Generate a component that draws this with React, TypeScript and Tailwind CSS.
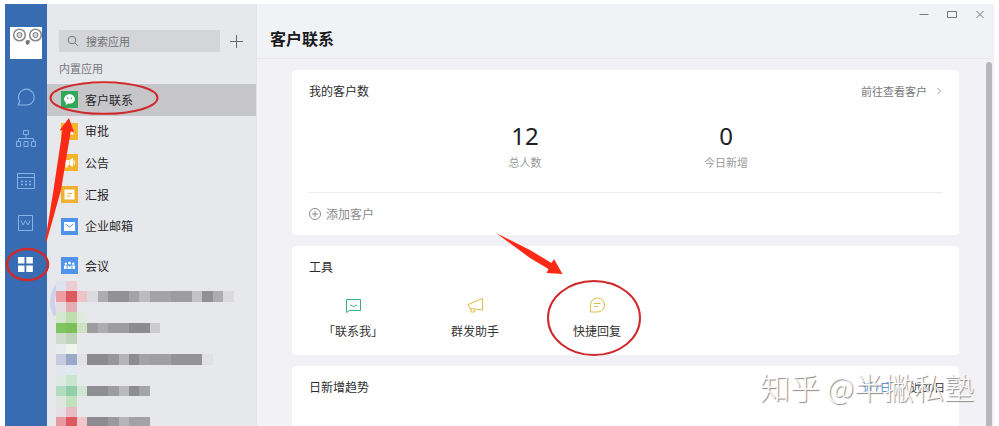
import React from "react";

type AppItem = {
	name: string;
	color: string;
	glyph: React.ReactNode;
};

const builtIn: AppItem[] = [
	{
		name: "客户联系",
		color: "bg-[#2fa85a]",
		glyph: (
			<>
				<ellipse cx="8.5" cy="8" rx="5.5" ry="4.7" fill="#fff" />
				<path d="M5 11.5 4.6 14l2.6-1.6z" fill="#fff" />
				<circle cx="6.6" cy="7.2" r="0.8" fill="#2fa85a" />
				<circle cx="10.4" cy="7.2" r="0.8" fill="#2fa85a" />
			</>
		),
	},
	{
		name: "审批",
		color: "bg-[#f3b32b]",
		glyph: <path d="M6 4h5v4l2 3.500H4.500L6 8z" fill="#fff" />,
	},
	{
		name: "公告",
		color: "bg-[#f3b32b]",
		glyph: <path d="M3 6h5v5H6.5v2.500h-2V11H3zM8.5 6 12 4v9l-3.500-2zM12.700 6.500H14v4h-1.300z" fill="#fff" />,
	},
	{
		name: "汇报",
		color: "bg-[#efb02f]",
		glyph: (
			<>
				<path d="M3.5 3.5h10v10h-10z" fill="#fff" />
				<path d="M6.5 7.5h5M5.5 10h4" stroke="#efb02f" />
			</>
		),
	},
	{
		name: "企业邮箱",
		color: "bg-[#4f93ea]",
		glyph: (
			<>
				<path d="M3 4h11v9H3z" fill="#fff" />
				<path d="m4.5 6 4 3 4-3" stroke="#4f93ea" fill="none" />
			</>
		),
	},
];

const meeting: AppItem = {
	name: "会议",
	color: "bg-[#4f93ea]",
	glyph: (
		<g fill="#fff">
			<circle cx="4.8" cy="6.8" r="1.2" />
			<circle cx="8.5" cy="6" r="1.5" />
			<circle cx="12.2" cy="6.8" r="1.2" />
			<path d="M3 12V8.500h2.600V12zM6.500 12V8l2 2 2-2v4zM11.400 12V8.500H14V12z" />
		</g>
	),
};

// [column, row, colour, columns wide]
const mosaic: [number, number, string, number?][] = [
	[0, 0, "#dfe2ef"], [1, 0, "#eccdd3"],
	[0, 1, "#ec9da2"], [1, 1, "#dc5960"], [2, 1, "#f0c4c7"], [3, 1, "#dcdbe0"], [4, 1, "#adadb1"],
	[5, 1, "#919196", 2], [7, 1, "#a3a3a8"], [8, 1, "#bbbbc0"], [9, 1, "#a4a4a8", 2], [11, 1, "#9c9ca1", 2],
	[13, 1, "#c3c3c7"], [14, 1, "#909095"], [15, 1, "#adadb1"], [16, 1, "#d9d9de"],
	[0, 2, "#e5dde2"], [1, 2, "#e0aeb3"],
	[0, 3, "#d5e7cf"], [1, 3, "#bddfb0"], [2, 3, "#e1eadf"],
	[0, 4, "#80c660"], [1, 4, "#79c158"], [2, 4, "#cde3c4"], [3, 4, "#9d9da1"], [4, 4, "#adadb1"],
	[5, 4, "#9d9da2", 2], [7, 4, "#8b8b90", 2], [9, 4, "#cbcbd0"],
	[0, 5, "#cfdccd"], [1, 5, "#bfd4bb"],
	[0, 6, "#e9ebed"], [1, 6, "#f1f4ef"],
	[0, 7, "#c6cbdf"], [1, 7, "#9ba9c9"], [2, 7, "#e1e2e5"], [3, 7, "#8c8c90", 2], [5, 7, "#98989c"],
	[6, 7, "#b4b4b9"], [7, 7, "#8c8c91"], [8, 7, "#a2a2a7"], [9, 7, "#9f9fa4", 2], [11, 7, "#939398", 3],
	[14, 7, "#e1e1e5"],
	[0, 8, "#e2e6ee"], [1, 8, "#dfe9f1"],
	[0, 9, "#dde9e2"], [1, 9, "#cae5cd"],
	[0, 10, "#b2dcc1"], [1, 10, "#91cfaa"], [2, 10, "#cfe6d3"], [3, 10, "#8e8e92", 2], [5, 10, "#9d9da1"],
	[6, 10, "#b9b9be"], [7, 10, "#8e8e93"], [8, 10, "#a4a4a9"],
	[0, 11, "#dde7df"], [1, 11, "#bfe1bd"],
	[0, 12, "#e8dfe4"], [1, 12, "#e9bcc4"],
	[0, 13, "#e69ba4"], [1, 13, "#dc5960"], [2, 13, "#efc6ca"], [3, 13, "#8c8c90", 2], [5, 13, "#9a9a9e"],
	[6, 13, "#b4b4b9"], [7, 13, "#a2a2a7", 2],
];

function AppRow({ item, active }: { item: AppItem; active?: boolean }) {
	return (
		<button
			type="button"
			className={`flex w-full items-center gap-[7px] pl-[14px] text-left text-[12px] text-[#27272a] ${active ? "bg-[#c6c6c9]" : ""}`}
		>
			<span className={`h-[17px] w-[17px] flex-none ${item.color}`}>
				<svg viewBox="0 0 17 17" className="h-full w-full">
					{item.glyph}
				</svg>
			</span>
			{item.name}
		</button>
	);
}

function RailButton({ label, children }: { label: string; children: React.ReactNode }) {
	return (
		<button type="button" aria-label={label} className="flex h-[42px] w-full items-center justify-center">
			<svg viewBox="0 0 20 20" className="h-5 w-5" fill="none" stroke="#86b4ea">
				{children}
			</svg>
		</button>
	);
}

function Rail() {
	return (
		<nav className="flex w-[42px] flex-none flex-col items-center bg-[#376cb2] pt-[23px]">
			<svg viewBox="0 0 32 32" className="mb-[17px] h-8 w-8 bg-white">
				<g fill="none" stroke="#8b8b8b" strokeWidth="1.6">
					<circle cx="9.5" cy="8" r="5.8" />
					<circle cx="25.5" cy="8" r="5.8" />
				</g>
				<g fill="#d9dcdf" stroke="#777">
					<circle cx="9.5" cy="8" r="2.5" />
					<circle cx="25.5" cy="8" r="2.5" />
				</g>
				<path d="M15.500 14.500q2-2.500 4.500-.5-.5 3.500-2.500 4-2-1-2-3.500z" fill="#777" />
			</svg>
			<RailButton label="消息">
				<path d="M2.300 18H10.500A7.900 7.900 0 1 0 3.600 14.200z" strokeWidth="1.2" strokeLinejoin="round" />
			</RailButton>
			<RailButton label="通讯录">
				<path d="M7.500 1.500h5v4h-5zM10 5.500v4M2.500 12.500v-3h15v3M.5 12.500h4v5h-4zM8 12.500h4v5H8zM15.500 12.500h4v5h-4z" />
			</RailButton>
			<RailButton label="日程">
				<path d="M1.500 2.500h17v15h-17zM1.500 6.500h17" />
				<path d="M5 10.500h10M5 13.500h10" strokeWidth="1.5" strokeDasharray="2 2" />
			</RailButton>
			<RailButton label="微文档">
				<path d="M2.500 2.500h14v15h-14z" />
				<path d="m5 7.500 2 4.500 2.500-4.500 2.500 4.500 2-4.500" />
			</RailButton>
			<RailButton label="工作台">
				<path d="M2 2h6.500v6.500H2zM10.300 2h6.500v6.500h-6.500zM2 10.500h6.500V17H2zM10.300 10.500h6.500V17h-6.500z" fill="#fff" stroke="none" />
			</RailButton>
		</nav>
	);
}

function AppList() {
	return (
		<aside className="w-[210px] flex-none overflow-hidden border-r border-[#e2e3e7] bg-[#e7e8ec] pt-[26px]">
			<div className="flex items-center gap-[7px] pl-3 pr-[11px]">
				<label className="flex h-[22px] min-w-0 flex-1 items-center gap-[7px] bg-[#d4d5d9] pl-2">
					<svg viewBox="0 0 12 12" className="h-3 w-3 flex-none" fill="none" stroke="#77787c">
						<circle cx="5" cy="5" r="3.8" />
						<path d="m8 8 3 3" />
					</svg>
					<input
						type="text"
						aria-label="搜索应用"
						placeholder="搜索应用"
						className="w-full min-w-0 bg-transparent text-[11px] outline-none placeholder:text-[#707175]"
					/>
				</label>
				<button type="button" aria-label="添加应用" className="flex h-5 w-[18px] flex-none items-center justify-center">
					<svg viewBox="0 0 14 14" className="h-[14px] w-[14px]" stroke="#67686b">
						<path d="M7.500 1v13M1 7.500h13" />
					</svg>
				</button>
			</div>
			<h2 className="flex h-8 items-center pl-3 text-[11px] text-[#77787d]">内置应用</h2>
			<div className="grid h-[158px] grid-rows-5">
				{builtIn.map((item, i) => (
					<AppRow key={item.name} item={item} active={i === 0} />
				))}
			</div>
			<div className="mt-2 grid h-[31px]">
				<AppRow item={meeting} />
			</div>
			<svg viewBox="0 0 210 147" className="h-[147px] w-[210px]">
				<path d="M16 0A26 26 0 0 0 9 34" fill="none" stroke="#ccd3e7" strokeWidth="5" />
				<g shapeRendering="crispEdges">
					{mosaic.map(([col, row, fill, span = 1]) => (
						<rect
							key={`${col}-${row}`}
							x={8.7 + col * 10.47}
							y={row * 10.47}
							width={span * 10.47}
							height={10.47}
							fill={fill}
						/>
					))}
				</g>
			</svg>
		</aside>
	);
}

function Stat({ value, label }: { value: number; label: string }) {
	return (
		<div className="flex w-[201px] flex-col items-center">
			<span className="font-['Noto_Sans'] text-[24px] leading-8 text-[#202124]">{value}</span>
			<span className="text-[11px] leading-5 text-[#999]">{label}</span>
		</div>
	);
}

function Tool({ label, color, children }: { label: string; color: string; children: React.ReactNode }) {
	return (
		<button type="button" className="flex w-[122px] flex-col items-center gap-[7px]">
			<svg viewBox="0 0 18 18" className={`h-[18px] w-[18px] ${color}`} fill="none" stroke="currentColor">
				{children}
			</svg>
			<span className="text-[12px] leading-5 text-[#333]">{label}</span>
		</button>
	);
}

function CardTitle({ children }: { children: React.ReactNode }) {
	return <h2 className="text-[12px] text-[#2c2c2e]">{children}</h2>;
}

// hand-drawn style marks pointing out the path to the quick reply tool
function Callouts() {
	return (
		<svg viewBox="0 0 999 426" className="pointer-events-none absolute left-0 top-0 h-[426px] w-[999px]">
			<g fill="none" stroke="#cf2a2c" strokeWidth="2">
				<ellipse cx="104" cy="98" rx="53.5" ry="15.8" />
				<ellipse cx="27.5" cy="264.500" rx="20.5" ry="15.5" strokeWidth="2.5" />
				<ellipse cx="594" cy="318" rx="46" ry="37" />
			</g>
			<g fill="#fb2a16">
				<path d="M45 242 53.500 190 62.500 130 59.500 130.500 69 118 74 132 70.700 131.500 61 190 47 240z" />
				<path d="M496 233 530 250 551.500 263 554 259 562.500 274 546.500 273 548.500 269 530 258z" />
			</g>
		</svg>
	);
}

export default function App() {
	return (
		<div className="relative h-screen overflow-hidden bg-white px-[5px] pt-1 font-['Noto_Sans_CJK_SC',sans-serif]">
			<div className="flex h-full">
				<Rail />
				<AppList />

				<div className="flex min-w-0 flex-1 flex-col bg-[#f1f1f6]">
					<header className="flex h-[55px] flex-none justify-between border-b border-[#e7e8ec] bg-[#f0f2f6] pl-[13px]">
						<h1 className="pt-[22px] text-[16px] font-bold leading-6 text-[#18191b]">客户联系</h1>
						<div className="flex h-[22px] items-center gap-1 pr-[2px]">
							<button type="button" aria-label="最小化" className="flex w-6 justify-center">
								<svg viewBox="0 0 10 10" className="h-[10px] w-[10px]" stroke="#77787b">
									<path d="M.5 4.500H9.500" />
								</svg>
							</button>
							<button type="button" aria-label="最大化" className="flex w-6 justify-center">
								<svg viewBox="0 0 10 10" className="h-[10px] w-[10px]" fill="none" stroke="#77787b">
									<path d="M.5 1.500h9v6h-9z" />
								</svg>
							</button>
							<button type="button" aria-label="关闭" className="flex w-6 justify-center">
								<svg viewBox="0 0 10 10" className="h-[10px] w-[10px]" stroke="#77787b">
									<path d="m1.500 1 7 7M8.500 1l-7 7" />
								</svg>
							</button>
						</div>
					</header>

					<div className="flex min-h-0 flex-1">
						<main className="flex min-w-0 flex-1 flex-col gap-[11px] overflow-hidden pl-[35px] pr-[27px] pt-[11px]">
							<section className="flex-none rounded-sm bg-white">
								<div className="flex h-[42px] items-center justify-between pl-[17px] pr-4">
									<CardTitle>我的客户数</CardTitle>
									<a href="#customers" className="flex items-center gap-2 text-[11px] text-[#77787b]">
										前往查看客户
										<svg viewBox="0 0 8 8" className="h-2 w-2" fill="none" stroke="#999">
											<path d="m2.500 1 3 3-3 3" />
										</svg>
									</a>
								</div>
								<div className="flex h-20 justify-center pt-2">
									<Stat value={12} label="总人数" />
									<Stat value={0} label="今日新增" />
								</div>
								<div className="mx-4 border-t border-[#ececee]">
									<button type="button" className="flex h-[42px] items-center gap-1 text-[12px] text-[#88898c]">
										<svg viewBox="0 0 14 14" className="h-[14px] w-[14px]" fill="none" stroke="#88898c">
											<circle cx="7" cy="7" r="5.5" />
											<path d="M7 4v6M4 7h6" />
										</svg>
										添加客户
									</button>
								</div>
							</section>

							<section className="flex-none rounded-sm bg-white pb-[14px]">
								<div className="flex h-[42px] items-center pl-[17px]">
									<CardTitle>工具</CardTitle>
								</div>
								<div className="flex pt-2">
									<Tool label="「联系我」" color="text-[#35b37e]">
										<path d="M2.500 3.500h14v11H5.500l-3 2z" />
										<path d="M6 9q3.500 3 7 0" />
									</Tool>
									<Tool label="群发助手" color="text-[#e0bd45]">
										<path d="M16.500 2.500 2 8.500l2 4 12.500 1.500zM5 12.700V16h3.500l.5-2.800" />
									</Tool>
									<Tool label="快捷回复" color="text-[#dcbc48]">
										<path d="M2.500 16V9a7 7 0 1 1 7 7z" />
										<path d="M6 7.500h6.500M6 10.500h4" />
									</Tool>
								</div>
							</section>

							<section className="h-[200px] flex-none rounded-sm bg-white">
								<div className="flex h-[42px] items-center justify-between pl-[17px] pr-[14px]">
									<CardTitle>日新增趋势</CardTitle>
									<div className="flex gap-5 text-[11px]">
										<button type="button" className="text-[#3f86c8]">近7日</button>
										<button type="button" className="text-[#333]">近30日</button>
									</div>
								</div>
							</section>
						</main>
						<div className="w-2 flex-none pr-[2px] pt-[3px]">
							<div className="h-full w-[6px] rounded-t-full bg-[#b7b7bd]" />
						</div>
					</div>
				</div>
			</div>

			<Callouts />
			<p className="pointer-events-none absolute bottom-5 right-[25px] text-[30px] font-light leading-10 text-white/90 [text-shadow:1px_1px_1px_#888]">
				知乎 @半撇私塾
			</p>
		</div>
	);
}
